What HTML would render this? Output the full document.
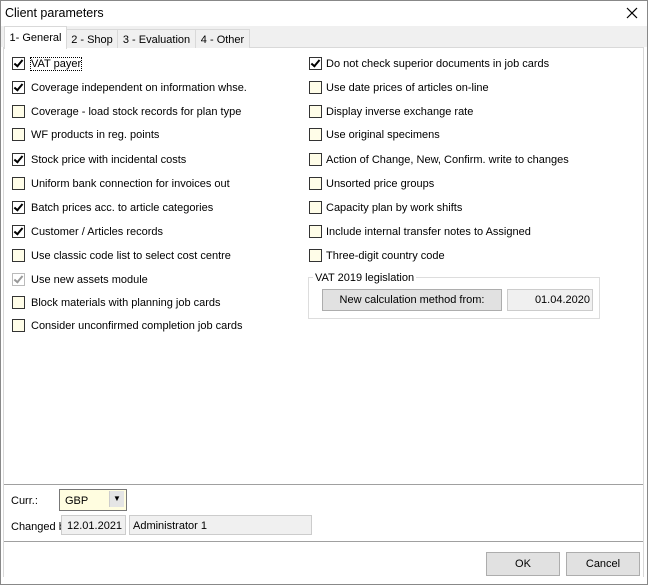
<!DOCTYPE html><html><head><style>
body{margin:0;width:648px;height:585px;overflow:hidden;background:#fff;font-family:"Liberation Sans",sans-serif;font-size:11px;color:#000;position:relative}
.a{position:absolute;white-space:nowrap}
.t{position:absolute;white-space:nowrap;margin-top:1px}
.cb{position:absolute;width:11px;height:11px;border:1px solid #333;background:#fffde8}
.cb.c{background:#fff}
.cb.c::after{content:"";position:absolute;left:3px;top:0px;width:3px;height:7px;border:solid #000;border-width:0 2px 2px 0;transform:rotate(40deg)}
.cb.g{border-color:#bbb;background:#fff}
.cb.g::after{content:"";position:absolute;left:3px;top:0px;width:3px;height:7px;border:solid #999;border-width:0 2px 2px 0;transform:rotate(40deg)}
.tab{position:absolute;top:29px;height:18px;background:#f0f0f0;border:1px solid #d9d9d9;border-bottom:none;line-height:20px;text-align:center}
</style></head><body>
<div class="a" style="left:0;top:0;width:646px;height:583px;border:1px solid #888"></div>
<div class="a" style="left:5px;top:6px;font-size:12.5px">Client parameters</div>
<svg class="a" style="left:626px;top:7px" width="12" height="12"><path d="M1 1L11 11M11 1L1 11" stroke="#000" stroke-width="1.2"/></svg>
<div class="a" style="left:1px;top:26px;width:646px;height:21px;background:#f0f0f0"></div>
<div class="a" style="left:3px;top:47px;width:640px;height:1px;background:#d9d9d9"></div>
<div class="a" style="left:3px;top:47px;width:1px;height:530px;background:#d9d9d9"></div>
<div class="a" style="left:643px;top:47px;width:1px;height:530px;background:#d9d9d9"></div>
<div class="tab" style="left:4px;top:26px;height:22px;width:61px;background:#fff;line-height:22px">1- General</div>
<div class="tab" style="left:66px;width:50px">2 - Shop</div>
<div class="tab" style="left:117px;width:77px">3 - Evaluation</div>
<div class="tab" style="left:195px;width:53px">4 - Other</div>

<div class="cb c" style="left:12px;top:57px"></div><div class="t" style="left:31px;top:57px;outline:1px dotted #000">VAT payer</div>
<div class="cb c" style="left:12px;top:81px"></div><div class="t" style="left:31px;top:81px">Coverage independent on information whse.</div>
<div class="cb" style="left:12px;top:105px"></div><div class="t" style="left:31px;top:105px">Coverage - load stock records for plan type</div>
<div class="cb" style="left:12px;top:128px"></div><div class="t" style="left:31px;top:128px">WF products in reg. points</div>
<div class="cb c" style="left:12px;top:153px"></div><div class="t" style="left:31px;top:153px">Stock price with incidental costs</div>
<div class="cb" style="left:12px;top:177px"></div><div class="t" style="left:31px;top:177px">Uniform bank connection for invoices out</div>
<div class="cb c" style="left:12px;top:201px"></div><div class="t" style="left:31px;top:201px">Batch prices acc. to article categories</div>
<div class="cb c" style="left:12px;top:225px"></div><div class="t" style="left:31px;top:225px">Customer / Articles records</div>
<div class="cb" style="left:12px;top:249px"></div><div class="t" style="left:31px;top:249px">Use classic code list to select cost centre</div>
<div class="cb g" style="left:12px;top:273px"></div><div class="t" style="left:31px;top:273px">Use new assets module</div>
<div class="cb" style="left:12px;top:296px"></div><div class="t" style="left:31px;top:296px">Block materials with planning job cards</div>
<div class="cb" style="left:12px;top:319px"></div><div class="t" style="left:31px;top:319px">Consider unconfirmed completion job cards</div>

<div class="cb c" style="left:309px;top:57px"></div><div class="t" style="left:326px;top:57px">Do not check superior documents in job cards</div>
<div class="cb" style="left:309px;top:81px"></div><div class="t" style="left:326px;top:81px">Use date prices of articles on-line</div>
<div class="cb" style="left:309px;top:105px"></div><div class="t" style="left:326px;top:105px">Display inverse exchange rate</div>
<div class="cb" style="left:309px;top:128px"></div><div class="t" style="left:326px;top:128px">Use original specimens</div>
<div class="cb" style="left:309px;top:153px"></div><div class="t" style="left:326px;top:153px">Action of Change, New, Confirm. write to changes</div>
<div class="cb" style="left:309px;top:177px"></div><div class="t" style="left:326px;top:177px">Unsorted price groups</div>
<div class="cb" style="left:309px;top:201px"></div><div class="t" style="left:326px;top:201px">Capacity plan by work shifts</div>
<div class="cb" style="left:309px;top:225px"></div><div class="t" style="left:326px;top:225px">Include internal transfer notes to Assigned</div>
<div class="cb" style="left:309px;top:249px"></div><div class="t" style="left:326px;top:249px">Three-digit country code</div>

<div class="a" style="left:308px;top:277px;width:290px;height:40px;border:1px solid #ddd"></div>
<div class="a" style="left:313px;top:272px;background:#fff;padding:0 2px">VAT 2019 legislation</div>
<div class="a" style="left:322px;top:289px;width:178px;height:20px;border:1px solid #adadad;background:#e1e1e1;text-align:center;line-height:20px">New calculation method from:</div>
<div class="a" style="left:507px;top:289px;width:82px;height:20px;border:1px solid #ccc;background:#f0f0f0;text-align:right;line-height:20px;padding-right:2px">01.04.2020</div>

<div class="a" style="left:4px;top:484px;width:639px;height:1px;background:#a0a0a0"></div>
<div class="a" style="left:11px;top:495px">Curr.:</div>
<div class="a" style="left:59px;top:489px;width:66px;height:20px;border:1px solid #777;background:#fffde0"></div>
<div class="a" style="left:65px;top:495px">GBP</div>
<div class="a" style="left:109px;top:491px;width:14px;height:16px;background:#e5e5e5;border-left:1px solid #ccc;text-align:center;font-size:8px;line-height:16px">▼</div>
<div class="a" style="left:11px;top:521px;width:50px;overflow:hidden">Changed by</div>
<div class="a" style="left:61px;top:515px;width:65px;height:20px;border:1px solid #ccc;background:#f0f0f0;line-height:21px;padding-left:5px;box-sizing:border-box">12.01.2021</div>
<div class="a" style="left:129px;top:515px;width:183px;height:20px;border:1px solid #ccc;background:#f0f0f0;line-height:21px;padding-left:3px;box-sizing:border-box">Administrator 1</div>
<div class="a" style="left:4px;top:541px;width:639px;height:1px;background:#a0a0a0"></div>
<div class="a" style="left:486px;top:552px;width:72px;height:22px;border:1px solid #adadad;background:#e1e1e1;text-align:center;line-height:23px">OK</div>
<div class="a" style="left:566px;top:552px;width:72px;height:22px;border:1px solid #adadad;background:#e1e1e1;text-align:center;line-height:23px">Cancel</div>
</body></html>
